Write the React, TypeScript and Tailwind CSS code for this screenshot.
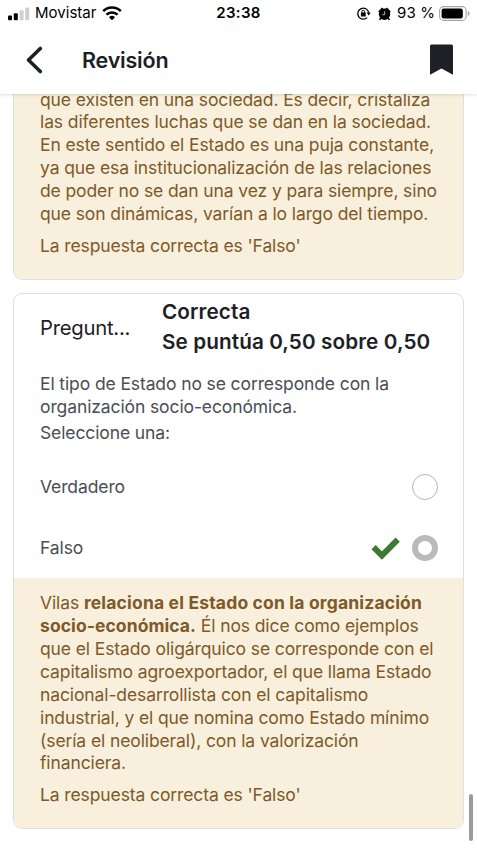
import { ReactNode } from "react";

const previousFeedback = [
  "que existen en una sociedad. Es decir, cristaliza",
  "las diferentes luchas que se dan en la sociedad.",
  "En este sentido el Estado es una puja constante,",
  "ya que esa institucionalización de las relaciones",
  "de poder no se dan una vez y para siempre, sino",
  "que son dinámicas, varían a lo largo del tiempo.",
];

const feedback = [
  "que el Estado oligárquico se corresponde con el",
  "capitalismo agroexportador, el que llama Estado",
  "nacional-desarrollista con el capitalismo",
  "industrial, y el que nomina como Estado mínimo",
  "(sería el neoliberal), con la valorización",
  "financiera.",
];

function StatusBar() {
  return (
    <div className="grid h-[27px] grid-cols-3 items-center text-black">
      <div className="flex items-center pl-2">
        <svg width="22" height="14" viewBox="0 0 22 14">
          <rect x="0" y="8.6" width="4" height="4.6" rx="1" />
          <rect x="5.8" y="6.2" width="4" height="7" rx="1" />
          <rect x="11.6" y="3.2" width="4" height="10" rx="1" fill="#cfcfcf" />
          <rect x="17.2" y="0.6" width="4" height="12.6" rx="1" fill="#cfcfcf" />
        </svg>
        <span className="ml-[5px] text-[15px] tracking-[0.02px]">Movistar</span>
        <svg className="ml-[6px]" width="20" height="15" viewBox="0 0 20 15" fill="none" stroke="#000" strokeWidth="2.5">
          <path d="M1.2 5.2a12.6 12.6 0 0 1 17.6 0" />
          <path d="M4.4 8.7a8 8 0 0 1 11.2 0" />
          <path d="M7 11.2a4.3 4.3 0 0 1 6 0L10 14.2z" fill="#000" stroke="none" />
        </svg>
      </div>
      <div className="text-center text-[15px] font-semibold tracking-[0.3px]">23:38</div>
      <div className="flex items-center justify-end pr-[7px]">
        <svg width="14" height="13" viewBox="0 0 14 13" fill="none" stroke="#000" strokeWidth="1.3">
          <path d="M10.2 10.600A5.5 5.5 0 1 1 11.700 5.500" />
          <path d="M9.6 5.5h4.200L11.700 8.500z" fill="#000" stroke="none" />
          <rect x="3.9" y="5.6" width="4.8" height="3.8" rx="0.5" fill="#000" stroke="none" />
          <path d="M4.9 6V4.7a1.4 1.4 0 0 1 2.8 0V6" strokeWidth="1" />
        </svg>
        <svg className="ml-[7px]" width="13" height="14" viewBox="0 0 13 14">
          <circle cx="6.5" cy="7.3" r="5.7" />
          <path d="M.3 4.6L3.9 .6 6 2.200 1.600 6.200zM12.700 4.600L9.100 .6 7 2.200 11.400 6.200z" />
          <path d="M2.8 10.800l-1.200 2M10.200 10.800l1.200 2" stroke="#000" strokeWidth="1.600" />
          <path d="M6.700 4.300v3.400H4.300" stroke="#fff" strokeWidth="0.7" fill="none" />
        </svg>
        <span className="ml-[6px] text-[15px] tracking-[0.100px]">93 %</span>
        <svg className="ml-[4px]" width="31" height="15" viewBox="0 0 31 15">
          <rect x="0.6" y="0.6" width="26.6" height="13.8" rx="4" fill="none" stroke="#a6a6a6" strokeWidth="1.1" />
          <rect x="2.6" y="2.6" width="21.2" height="9.8" rx="2.2" />
          <path d="M28.8 5v5c1.4-.6 1.8-1.6 1.8-2.5S30.200 5.600 28.8 5z" fill="#a6a6a6" />
        </svg>
      </div>
    </div>
  );
}

function Lines({ lines }: { lines: string[] }) {
  return (
    <>
      {lines.map((line) => (
        <span key={line} className="block">
          {line}
        </span>
      ))}
    </>
  );
}

function Feedback({ children, className }: { children: ReactNode; className: string }) {
  return (
    <div className={`bg-[#f9efdd] pl-[26px] text-[#7d5a29] ${className}`}>
      {children}
      <p className="mt-[9px]">La respuesta correcta es 'Falso'</p>
    </div>
  );
}

export default function App() {
  return (
    <div className="relative flex h-[848px] w-[477px] flex-col overflow-hidden bg-white font-['Inter',sans-serif]">
      <header className="z-10 h-[94px] shrink-0 bg-white shadow-[0_1px_3px_rgba(0,0,0,0.13)]">
        <StatusBar />
        <div className="flex h-[66px] items-center pl-[26px] pr-[23px] text-[#1d2125]">
          <svg width="17" height="28" viewBox="0 0 17 28" fill="none" stroke="currentColor" strokeWidth="3.6" strokeLinecap="round" strokeLinejoin="round">
            <path d="M14.300 2.500L2.500 14l11.800 11.500" />
          </svg>
          <h1 className="ml-[39px] text-[21.500px] font-semibold tracking-[-0.2px]">Revisión</h1>
          <svg className="ml-auto" width="25" height="32" viewBox="0 0 25 32" fill="currentColor">
            <path d="M2.600 .4h19.800A1.600 1.600 0 0 1 24 2V30.800L12.500 24.600 1 30.800V2A1.600 1.600 0 0 1 2.600 .4z" />
          </svg>
        </div>
      </header>

      <main className="px-[13px] text-[17.500px] leading-[22.900px] tracking-[-0.110px] whitespace-nowrap">
        <section className="-mt-[5.500px] overflow-hidden rounded-b-[9px] border border-t-0 border-[#dedee6]">
          <Feedback className="pb-[21px]">
            <p>
              <Lines lines={previousFeedback} />
            </p>
          </Feedback>
        </section>

        <section className="mt-[13px] overflow-hidden rounded-[9px] border border-[#dedee6] text-[#4a4e55]">
          <div className="flex h-[68px] items-center pl-[26px] text-[20.300px] leading-[30.500px] text-[#1d2125]">
            <span className="w-[122px] tracking-[-0.25px]">Pregunt...</span>
            <div className="-mt-px text-[20.700px] font-semibold tracking-[0.1px]">
              <div>Correcta</div>
              <div>Se puntúa 0,50 sobre 0,50</div>
            </div>
          </div>
          <div className="pl-[26px] pr-[25px] pt-[11.500px]">
            <p>
              El tipo de Estado no se corresponde con la
              <br />
              organización socio-económica.
            </p>
            <p className="mt-[3px]">Seleccione una:</p>
            <div className="mt-[11.500px] flex h-[61px] items-center justify-between">
              <span>Verdadero</span>
              <span className="size-[26px] rounded-full border-[1.500px] border-[#b4b5b7]" />
            </div>
            <div className="flex h-[60.500px] items-center">
              <span className="pt-px">Falso</span>
              <svg className="ml-auto" width="30" height="24" viewBox="0 0 30 24" fill="none" stroke="#3f7a35" strokeWidth="6">
                <path d="M2.600 11.200l8.300 8.300L26.700 3.700" />
              </svg>
              <span className="ml-[11px] size-[26px] rounded-full border-[6.500px] border-[#b9babb]" />
            </div>
          </div>
          <Feedback className="pt-[14px] pb-[20.500px]">
            <p>
              Vilas <b className="tracking-[0.17px]">relaciona el Estado con la organización</b>
              <br />
              <b className="tracking-[0.08px]">socio-económica.</b> Él nos dice como ejemplos
              <Lines lines={feedback} />
            </p>
          </Feedback>
        </section>
      </main>

      <div className="absolute top-[794px] right-[4px] h-[47px] w-[4px] rounded-full bg-[#9b9b9b]" />
    </div>
  );
}
